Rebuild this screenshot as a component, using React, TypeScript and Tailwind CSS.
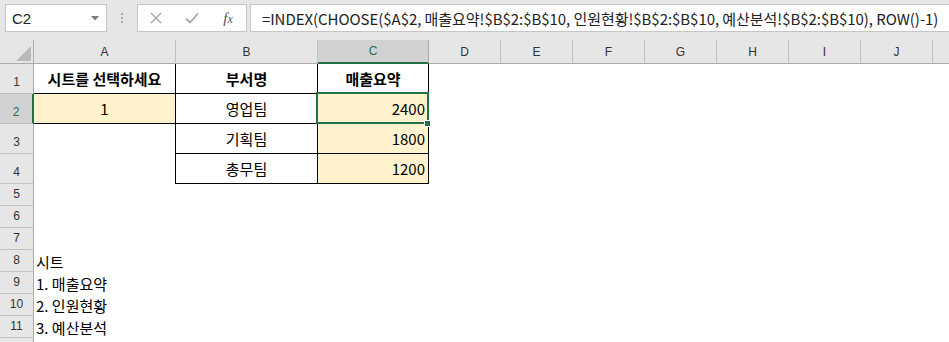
import React from "react";

const KR = { fontFamily: '"Noto Sans CJK KR", "Noto Sans", sans-serif' };
const HD = { fontFamily: '"Liberation Sans", Arial, sans-serif' };

const colLetters = ["A", "B", "C", "D", "E", "F", "G", "H", "I", "J", ""];
const rowNums = [1, 2, 3, 4, 5, 6, 7, 8, 9, 10, 11, 12];

type Cell = { text?: string; cls?: string; align?: "l" | "c" | "r"; bold?: boolean };

function cellFor(r: number, c: number): Cell {
  // c: 0 = A, 1 = B, 2 = C ...
  const tb = "border-r border-b border-black";
  if (r === 1) {
    if (c === 0) return { text: "시트를 선택하세요", cls: tb, align: "c", bold: true };
    if (c === 1) return { text: "부서명", cls: tb, align: "c", bold: true };
    if (c === 2) return { text: "매출요약", cls: tb, align: "c", bold: true };
  }
  if (r === 2) {
    if (c === 0) return { text: "1", cls: tb + " bg-[#fff2cc]", align: "c" };
    if (c === 1) return { text: "영업팀", cls: tb, align: "c" };
    if (c === 2) return { text: "2400", cls: tb + " bg-[#fff2cc]", align: "r" };
  }
  if (r === 3) {
    if (c === 0) return { cls: "border-r border-black" };
    if (c === 1) return { text: "기획팀", cls: tb, align: "c" };
    if (c === 2) return { text: "1800", cls: tb + " bg-[#fff2cc]", align: "r" };
  }
  if (r === 4) {
    if (c === 0) return { cls: "border-r border-black" };
    if (c === 1) return { text: "총무팀", cls: tb, align: "c" };
    if (c === 2) return { text: "1200", cls: tb + " bg-[#fff2cc]", align: "r" };
  }
  if (c === 0) {
    if (r === 8) return { text: "시트", align: "l" };
    if (r === 9) return { text: "1. 매출요약", align: "l" };
    if (r === 10) return { text: "2. 인원현황", align: "l" };
    if (r === 11) return { text: "3. 예산분석", align: "l" };
  }
  return {};
}

export default function App() {
  return (
    <div className="w-[949px] h-[342px] overflow-hidden bg-white relative">
      {/* Formula bar */}
      <div className="h-[40px] bg-[#e6e6e6] flex items-start pt-[4px]">
        <div className="ml-[5px] w-[102px] h-[28px] bg-white border border-[#c6c6c6] flex items-center justify-between pl-[6px] pr-[7px]">
          <span className="text-[15px] text-[#222] leading-none" style={HD}>
            C2
          </span>
          <svg width="8" height="5" viewBox="0 0 8 5">
            <path d="M0 0 L8 0 L4 4.5 Z" fill="#7a7a7a" />
          </svg>
        </div>
        <div className="ml-[14px] mt-[9px] flex flex-col gap-[2px]">
          <div className="w-[2px] h-[2px] bg-[#a8a8a8]" />
          <div className="w-[2px] h-[2px] bg-[#a8a8a8]" />
          <div className="w-[2px] h-[2px] bg-[#a8a8a8]" />
        </div>
        <div className="ml-[14px] w-[110px] h-[28px] bg-white border border-[#c6c6c6] flex items-center">
          <div className="w-[36px] flex justify-center">
            <svg width="12" height="12" viewBox="0 0 12 12">
              <path d="M1 1 L11 11 M11 1 L1 11" stroke="#a6a6a6" strokeWidth="1.4" />
            </svg>
          </div>
          <div className="w-[36px] flex justify-center">
            <svg width="14" height="12" viewBox="0 0 14 12">
              <path d="M1 6.5 L5 10.5 L13 1.5" stroke="#a6a6a6" strokeWidth="1.8" fill="none" />
            </svg>
          </div>
          <div className="w-[36px] flex justify-center">
            <span
              className="italic text-[15px] text-[#555] leading-none"
              style={{ fontFamily: '"Liberation Serif", "Times New Roman", serif' }}
            >
              f<span className="text-[12px]">x</span>
            </span>
          </div>
        </div>
        <div className="ml-[3px] flex-1 h-[28px] bg-white border-y border-l border-[#c6c6c6] flex items-center pl-[11px] overflow-hidden">
          <span className="text-[15px] text-[#222] whitespace-nowrap leading-none tracking-[-0.05px]" style={KR}>
            =INDEX(CHOOSE($A$2, 매출요약!$B$2:$B$10, 인원현황!$B$2:$B$10, 예산분석!$B$2:$B$10), ROW()-1)
          </span>
        </div>
      </div>

      {/* Sheet */}
      <div className="relative">
        <div className="grid grid-cols-[34px_142px_142px_111px_72px_72px_72px_72px_72px_72px_72px_72px] grid-rows-[24px_30px_30px_30px_30px_22px_22px_22px_22px_22px_22px_22px_22px]">
          {/* header row */}
          <div className="bg-[#e6e6e6] border-r border-b border-[#ababab] relative">
            <svg className="absolute left-[16px] top-[6px]" width="15" height="15" viewBox="0 0 15 15">
              <path d="M15 0 L15 15 L0 15 Z" fill="#b9b9b9" />
            </svg>
          </div>
          {colLetters.map((l, i) => (
            <div
              key={i}
              className={
                i === 2
                  ? "bg-[#d2d2d2] border-b-2 border-b-[#217346] border-r border-r-[#ababab] flex items-center justify-center text-[12px] text-[#217346]"
                  : "bg-[#e6e6e6] border-b border-b-[#ababab] border-r border-r-[#c0c0c0] flex items-center justify-center text-[12px] text-[#333]"
              }
              style={HD}
            >
              {l}
            </div>
          ))}
          {/* rows */}
          {rowNums.map((r) => (
            <React.Fragment key={r}>
              <div
                className={
                  r === 2
                    ? "bg-[#d2d2d2] border-r-2 border-r-[#217346] border-b border-b-[#c0c0c0] flex items-end justify-center pb-[5px] text-[12px] leading-none text-[#217346]"
                    : "bg-[#e6e6e6] border-r border-r-[#ababab] border-b border-b-[#c0c0c0] flex items-end justify-center pb-[5px] text-[12px] leading-none text-[#333]"
                }
                style={HD}
              >
                {r < 12 ? r : ""}
              </div>
              {colLetters.map((_, c) => {
                const cell = cellFor(r, c);
                const al =
                  cell.align === "c"
                    ? "justify-center"
                    : cell.align === "r"
                    ? "justify-end pr-[3px]"
                    : "justify-start pl-[2px]";
                return (
                  <div
                    key={c}
                    className={`flex items-center ${al} ${cell.cls ?? ""} ${cell.align === "l" ? "overflow-visible whitespace-nowrap relative z-10" : "overflow-hidden"}`}
                  >
                    {cell.text && (
                      <span
                        className={`text-[15px] leading-none text-black whitespace-nowrap ${cell.bold ? "font-semibold" : ""}`}
                        style={KR}
                      >
                        {cell.text}
                      </span>
                    )}
                  </div>
                );
              })}
            </React.Fragment>
          ))}
        </div>
        {/* selection */}
        <div className="absolute left-[316px] top-[52px] w-[113px] h-[32px] border-2 border-[#217346] pointer-events-none z-20" />
        <div className="absolute left-[424px] top-[80px] w-[7px] h-[7px] bg-[#217346] border border-white z-30" />
      </div>
    </div>
  );
}
